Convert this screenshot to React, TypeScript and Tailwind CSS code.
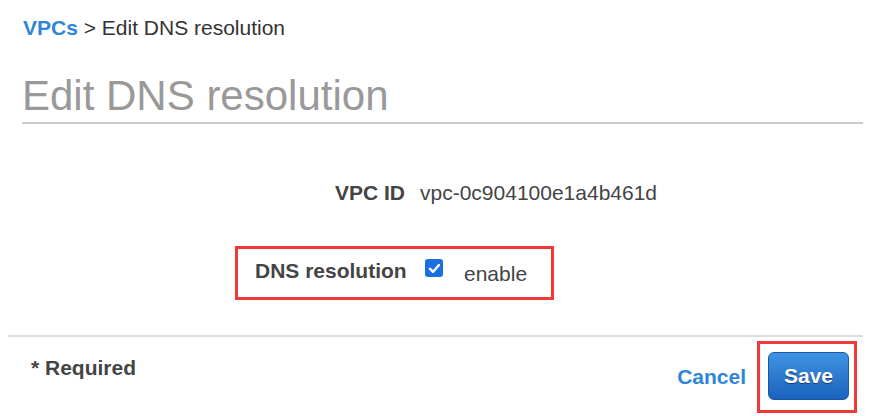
const App = () => {
  return (
    <div className="w-full min-h-[416px] bg-white font-['Liberation_Sans',Arial,sans-serif] text-[#444]">
      <div className="ml-[22px] mr-[8px] pt-[16px]">
        <div className="pl-[1px] text-[21px] leading-[24px] text-[#333]">
          <span className="font-bold text-[#2f86d8]">VPCs</span>
          <span> &gt; Edit DNS resolution</span>
        </div>
        <h1 className="mt-[32px] pb-[2px] border-b-[2px] border-[#cccccc] text-[42px] leading-[48px] text-[#999999]">
          Edit DNS resolution
        </h1>
      </div>

      <div className="ml-[235px] mt-[44px] flex flex-col gap-[27px]">
        <div className="flex w-fit border-[3px] border-transparent px-[17px] pt-[10px] pb-[11px]">
          <div className="w-[150px] whitespace-nowrap text-right text-[21px] leading-[24px] font-bold">
            VPC ID
          </div>
          <div className="ml-[15px] text-[21px] leading-[24px] text-[#444]">
            vpc-0c904100e1a4b461d
          </div>
        </div>

        <div className="flex items-start w-[319px] border-[3px] border-[#f03a3a] pl-[17px] pt-[10px] pb-[11px]">
          <div className="w-[150px] shrink-0 whitespace-nowrap text-right text-[21px] leading-[24px] font-bold">
            DNS resolution
          </div>
          <span className="ml-[20px] flex h-[18px] w-[18px] shrink-0 items-center justify-center rounded-[3px] bg-[#1a6fe0]">
            <svg width="13" height="13" viewBox="0 0 13 13" fill="none">
              <path
                d="M2 6.8 L5.1 9.8 L11 3"
                stroke="white"
                strokeWidth="2.4"
                strokeLinecap="round"
                strokeLinejoin="round"
              />
            </svg>
          </span>
          <span className="ml-[21px] mt-[3px] whitespace-nowrap text-[21px] leading-[24px] text-[#444]">
            enable
          </span>
        </div>
      </div>

      <div className="mx-[8px] mt-[35px] flex items-start justify-between border-t-[2px] border-[#dddddd]">
        <p className="pl-[23px] mt-[19px] text-[21px] leading-[24px] font-bold">
          * Required
        </p>
        <div className="flex items-center mt-[4px] pr-[6px]">
          <button className="text-[21px] leading-[24px] font-bold text-[#2f86d8]">
            Cancel
          </button>
          <div className="ml-[11px] border-[3px] border-[#f03a3a] pl-[8px] pr-[5px] pt-[8px] pb-[10px]">
            <button className="flex h-[48px] w-[81px] items-center justify-center rounded-[6px] border border-[#1b58a3] bg-gradient-to-b from-[#3f93e4] to-[#1b62bc] text-[21px] font-bold text-white [text-shadow:0_1px_1px_rgba(0,0,0,0.5)]">
              Save
            </button>
          </div>
        </div>
      </div>
    </div>
  );
};

export default App;
